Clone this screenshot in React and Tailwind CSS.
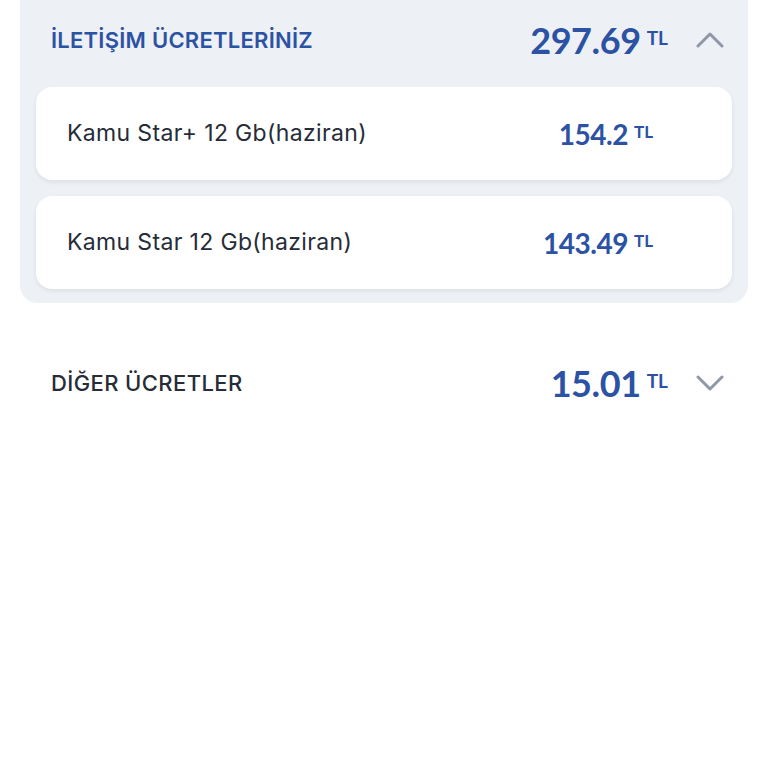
import React from 'react';

const items = [
  { name: 'Kamu Star+ 12 Gb(haziran)', amount: '154.2' },
  { name: 'Kamu Star 12 Gb(haziran)', amount: '143.49' },
];

function Chevron({ up }) {
  return (
    <svg width="28" height="20" viewBox="0 0 28 20" fill="none" className="shrink-0">
      <path
        d={up ? 'M2 16 L14 4 L26 16' : 'M2 4 L14 16 L26 4'}
        stroke="#8f97a8"
        strokeWidth="3"
        strokeLinecap="round"
        strokeLinejoin="round"
      />
    </svg>
  );
}

function Amount({ value, big }) {
  return (
    <div className="flex items-baseline gap-[6px] text-[#2b52a3] font-bold font-['Lato',sans-serif]">
      <span className={big ? 'text-[36px] leading-none tracking-[-0.4px]' : 'text-[28px] leading-none tracking-[-0.5px]'}>
        {value}
      </span>
      <span className={big ? 'text-[19px] leading-none relative -top-[9px]' : 'text-[17px] leading-none relative -top-[7px]'}>
        TL
      </span>
    </div>
  );
}

export default function App() {
  return (
    <div className="w-[768px] h-[768px] bg-white font-['Inter',sans-serif]">
      {/* Expanded section */}
      <div className="mx-[20px] bg-[#edf0f4] rounded-b-[18px] px-[16px] pb-[14px]">
        <div className="h-[80px] flex items-center pl-[15px] pr-[8px]">
          <p className="flex-1 text-[22px] font-semibold text-[#2b52a3] tracking-[0.25px]">
            İLETİŞİM ÜCRETLERİNİZ
          </p>
          <Amount value="297.69" big />
          <div className="ml-[28px]">
            <Chevron up />
          </div>
        </div>

        <div className="mt-[7px] flex flex-col gap-[16px]">
          {items.map((item, i) => (
            <div
              key={i}
              className="h-[93px] bg-white rounded-[16px] flex items-center pl-[31px] pr-[79px] shadow-[0_2px_4px_rgba(30,40,60,0.08)]"
            >
              <p className="flex-1 text-[23px] text-[#262c38] tracking-[0.35px]">{item.name}</p>
              <Amount value={item.amount} />
            </div>
          ))}
        </div>
      </div>

      {/* Collapsed section */}
      <div className="mx-[20px] mt-[40px] h-[80px] flex items-center pl-[31px] pr-[24px]">
        <p className="flex-1 text-[22px] font-medium text-[#262c38] tracking-[0.4px]">DİĞER ÜCRETLER</p>
        <Amount value="15.01" big />
        <div className="ml-[28px]">
          <Chevron />
        </div>
      </div>
    </div>
  );
}
